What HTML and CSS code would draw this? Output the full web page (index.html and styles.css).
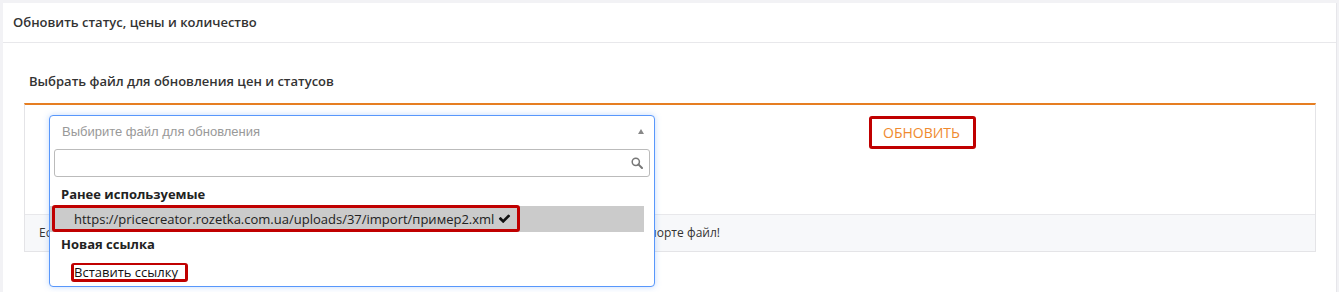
FILE: index.html
```html
<!DOCTYPE html>
<html>
  <head>
    <title>Обновить статус, цены и количество</title>
    <link rel="stylesheet" href="styles.css">
  </head>
  <body>
    <div class="panel">
      <div class="panel-head">Обновить статус, цены и количество</div>
      <div class="panel-body">
        <div class="box-title">Выбрать файл для обновления цен и статусов</div>
        <div class="box">
          <div class="box-body">
            <div class="select-col">
              <div class="select open">
                <div class="selection">
                  <span class="placeholder">Выбирите файл для обновления</span>
                  <span class="arrow"></span>
                </div>
                <div class="search">
                  <input type="text">
                  <svg class="search-icon" width="12" height="12" viewBox="0 0 12 12">
                    <circle cx="4.8" cy="4.8" r="3.6" fill="none" stroke="#777" stroke-width="1.5"/>
                    <path d="M7.4 7.4 L11 11" stroke="#777" stroke-width="2" stroke-linecap="round"/>
                  </svg>
                </div>
                <ul class="results">
                  <li class="group">Ранее используемые</li>
                  <li class="option active">
                    <span class="mark mark-link">https://pricecreator.rozetka.com.ua/uploads/37/import/пример2.xml
                      <svg class="check" width="13" height="13" viewBox="0 0 1792 1792"><path d="M1671 566q0 40-28 68l-724 724-136 136q-28 28-68 28t-68-28l-136-136-362-362q-28-28-28-68t28-68l136-136q28-28 68-28t68 28l294 295 656-657q28-28 68-28t68 28l136 136q28 28 28 68z" fill="#111"/></svg>
                    </span>
                  </li>
                  <li class="group group-new">Новая ссылка</li>
                  <li class="option">
                    <span class="mark mark-paste">Вставить ссылку</span>
                  </li>
                </ul>
              </div>
            </div>
            <button type="button" class="btn-update">ОБНОВИТЬ</button>
          </div>
          <div class="box-footer">Если нужного файла нет в списке, вставьте новую ссылку на файл или загрузите ранее в разделе об импорте файл!</div>
        </div>
      </div>
    </div>
  </body>
</html>
```

FILE: styles.css
```css
* {
  box-sizing: border-box;
}

html, body {
  height: 100%;
}

body {
  margin: 0;
  padding: 3px 2px 0 3px;
  background-color: #f2f2f5;
  font-family: "Open Sans", "Liberation Sans", sans-serif;
  font-size: 13px;
  color: #333;
  overflow: hidden;
}

.panel {
  height: 100%;
  background-color: #fff;
  border-right: 1px solid #e6e6ea;
}

.panel-head {
  height: 40px;
  line-height: 39px;
  padding: 0 10px;
  font-weight: 600;
  border-bottom: 1px solid #e8e8eb;
}

.panel-body {
  padding: 28px 20px 0 21px;
}

.box-title {
  line-height: 20px;
  padding: 0 5px 12px;
  font-weight: 600;
}

.box {
  border: 1px solid #e4e4e7;
  border-top: 2px solid #e67e22;
}

.box-body {
  display: flex;
  align-items: flex-start;
  height: 109px;
  padding: 10px 24px 0;
}

.select-col {
  position: relative;
  width: 606px;
  height: 32px;
}

/* open select2-like dropdown lying over the footer */
.select {
  position: absolute;
  top: 0;
  left: 0;
  width: 606px;
  z-index: 5;
  background-color: #fff;
  border: 1px solid #5897fb;
  border-radius: 4px;
  box-shadow: 0 0 6px rgba(88, 151, 251, 0.35);
}

.selection {
  display: flex;
  align-items: center;
  justify-content: space-between;
  height: 30px;
  padding: 0 10px 0 12px;
}

.placeholder {
  font-family: "Liberation Sans", Arial, sans-serif;
  color: #999;
}

.arrow {
  width: 0;
  height: 0;
  border-left: 3px solid transparent;
  border-right: 3px solid transparent;
  border-bottom: 5px solid #888;
}

.search {
  position: relative;
  margin: 3px 4px 0;
}

.search input {
  display: block;
  width: 100%;
  height: 28px;
  border: 1px solid #bbb;
  border-radius: 3px;
  outline: none;
}

.search-icon {
  position: absolute;
  right: 7px;
  top: 8px;
}

.results {
  list-style: none;
  margin: 0 10px 0 0;
  padding: 5px 0 3px;
}

.group {
  height: 24px;
  line-height: 24px;
  padding-left: 11px;
  font-weight: 700;
  color: #222;
}

.group-new {
  height: 25px;
}

.option {
  height: 26px;
  display: flex;
  align-items: center;
  color: #222;
}

.option.active {
  background-color: #cbcbcb;
}

.mark {
  display: inline-flex;
  align-items: center;
  border: 3px solid #c00000;
  border-radius: 3px;
}

.mark-link {
  height: 27px;
  margin: -1px 0 0 2px;
  padding: 0 6px 0 19px;
  gap: 4px;
}

.mark-paste {
  height: 19px;
  margin: 5px 0 0 21px;
  padding: 0 7px 0 0;
  border-width: 2px 3px 3px;
  background-color: #fff;
  color: #111;
}

.btn-update {
  margin-left: 214px;
  margin-top: 1px;
  height: 33px;
  padding: 0 13px 0 11px;
  font-family: "Open Sans", "Liberation Sans", sans-serif;
  font-size: 14px;
  color: #ef8a2e;
  background-color: #fff;
  border: 3px solid #c00000;
  border-radius: 3px;
  cursor: pointer;
}

.box-footer {
  height: 37px;
  line-height: 36px;
  padding-left: 14px;
  background-color: #f7f8fa;
  border-top: 1px solid #e8e8eb;
  font-size: 12px;
  word-spacing: 0.2px;
  white-space: nowrap;
  overflow: hidden;
}
```
